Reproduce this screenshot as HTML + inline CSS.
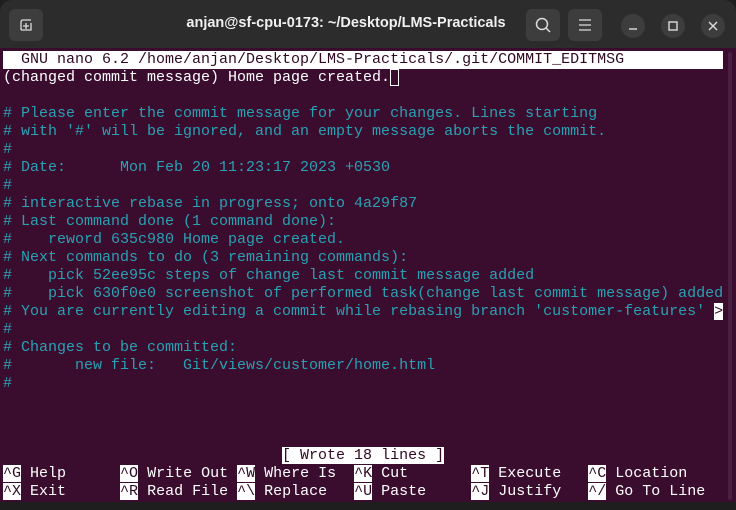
<!DOCTYPE html>
<html><head><meta charset="utf-8"><style>
html,body{margin:0;padding:0;width:736px;height:510px;overflow:hidden;background:#1e1e1e;}
.win{position:absolute;left:0;top:0;width:736px;height:502px;background:#3a0c2e;border-radius:12px 12px 0 0;overflow:hidden;}
.tb{position:absolute;left:0;top:0;width:736px;height:48px;background:#2c2c2c;}
.title{position:absolute;left:0;width:692px;top:15px;text-align:center;color:#f0f0f0;font:bold 14.5px "Liberation Sans",sans-serif;z-index:2;}
.btn{position:absolute;top:9px;width:34px;height:32px;background:#3d3d3d;border-radius:6px;}
.cb{position:absolute;top:14px;width:24px;height:24px;background:#3d3d3d;border-radius:50%;}
.term{position:absolute;left:3px;top:51px;font:15px/18px "Liberation Mono",monospace;color:#fff;}
.term div{height:18px;white-space:pre;}
.c{color:#2aa1b3;}
.inv{background:#fff;color:#300a24;}
.sb{position:absolute;left:728px;top:52px;width:4px;height:448px;background:#4a2040;border-radius:2px;}
</style></head><body>
<div class="win">
<div class="tb">
 <div class="btn" style="left:9px;"><svg width="34" height="32"><path d="M12 21V13q0-2 2-2h8M12 21h10V14" fill="none" stroke="#ddd" stroke-width="1.3"/><path d="M17 14v6M14 17h6" stroke="#ddd" stroke-width="1.3"/></svg></div>
 <div class="btn" style="left:526px;"><svg width="34" height="32"><circle cx="16" cy="15" r="5.5" fill="none" stroke="#ddd" stroke-width="1.5"/><path d="M20 19l4 4" stroke="#ddd" stroke-width="1.5"/></svg></div>
 <div class="btn" style="left:568px;"><svg width="34" height="32"><path d="M11 11h12M11 16h12M11 21h12" stroke="#ddd" stroke-width="1.3"/></svg></div>
 <div class="cb" style="left:621px;"><svg width="24" height="24"><path d="M8 15h8" stroke="#ddd" stroke-width="1.4"/></svg></div>
 <div class="cb" style="left:661px;"><svg width="24" height="24"><rect x="8" y="8" width="8" height="8" fill="none" stroke="#ddd" stroke-width="1.4"/></svg></div>
 <div class="cb" style="left:701px;"><svg width="24" height="24"><path d="M8 8l8 8M16 8l-8 8" stroke="#ddd" stroke-width="1.4"/></svg></div>
 <div class="title">anjan@sf-cpu-0173: ~/Desktop/LMS-Practicals</div>
</div>
<div class="sb"></div>
<div class="term"><div class="inv" style="width:720px">  GNU nano 6.2 /home/anjan/Desktop/LMS-Practicals/.git/COMMIT_EDITMSG</div><div>(changed commit message) Home page created.<span style="outline:1px solid #fff;outline-offset:-1px;display:inline-block;width:9px;height:17px;vertical-align:top"></span></div><div></div><div class="c"># Please enter the commit message for your changes. Lines starting</div><div class="c"># with '#' will be ignored, and an empty message aborts the commit.</div><div class="c">#</div><div class="c"># Date:      Mon Feb 20 11:23:17 2023 +0530</div><div class="c">#</div><div class="c"># interactive rebase in progress; onto 4a29f87</div><div class="c"># Last command done (1 command done):</div><div class="c">#    reword 635c980 Home page created.</div><div class="c"># Next commands to do (3 remaining commands):</div><div class="c">#    pick 52ee95c steps of change last commit message added</div><div class="c">#    pick 630f0e0 screenshot of performed task(change last commit message) added</div><div class="c"># You are currently editing a commit while rebasing branch 'customer-features' <span class="inv">&gt;</span></div><div class="c">#</div><div class="c"># Changes to be committed:</div><div class="c">#       new file:   Git/views/customer/home.html</div><div class="c">#</div><div></div><div></div><div></div><div>                               <span class="inv">[ Wrote 18 lines ]</span></div><div><span class="inv">^G</span> Help      <span class="inv">^O</span> Write Out <span class="inv">^W</span> Where Is  <span class="inv">^K</span> Cut       <span class="inv">^T</span> Execute   <span class="inv">^C</span> Location</div><div><span class="inv">^X</span> Exit      <span class="inv">^R</span> Read File <span class="inv">^\</span> Replace   <span class="inv">^U</span> Paste     <span class="inv">^J</span> Justify   <span class="inv">^/</span> Go To Line</div></div>
</div>
</body></html>
